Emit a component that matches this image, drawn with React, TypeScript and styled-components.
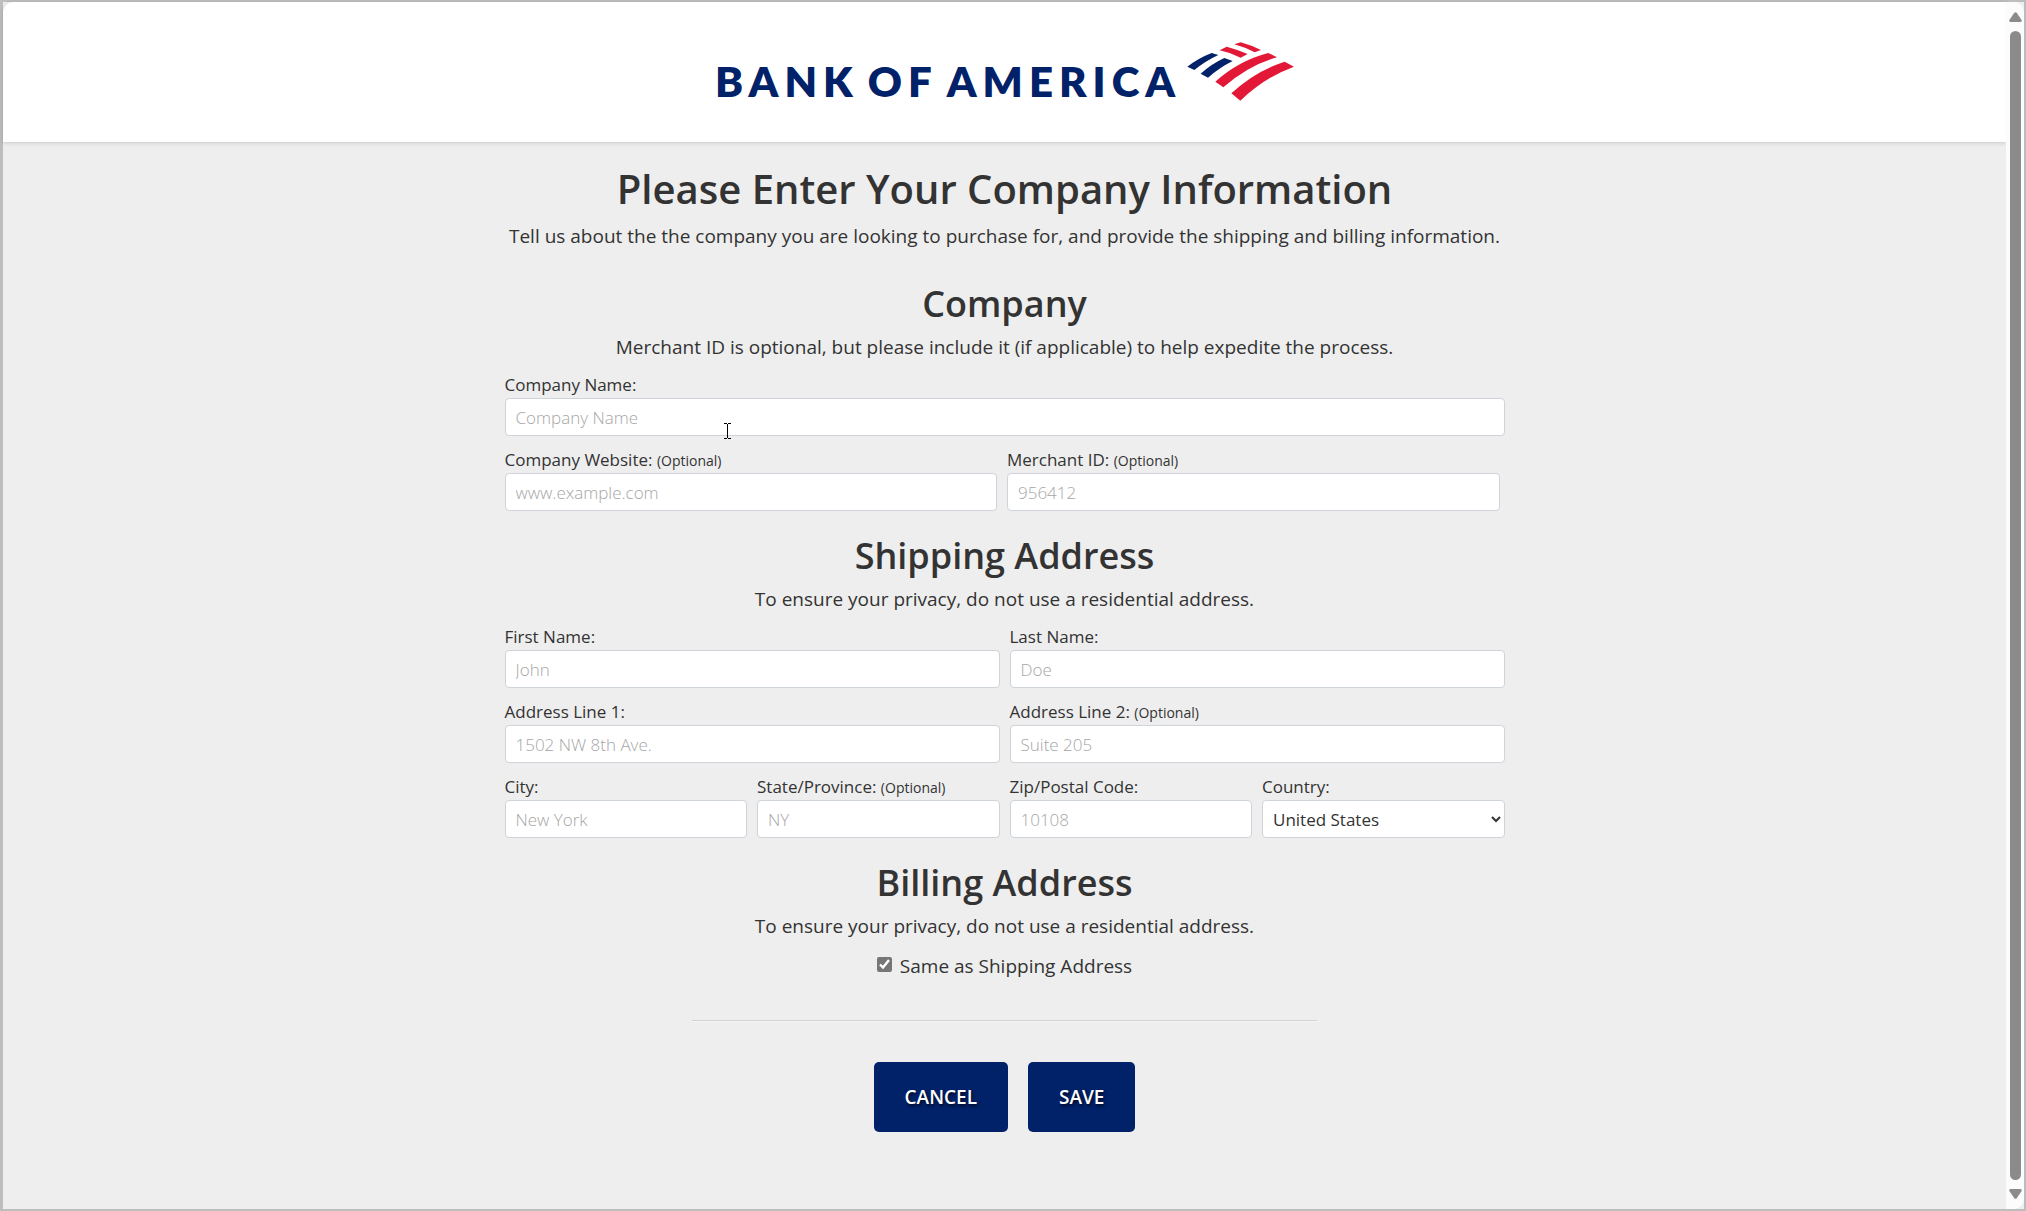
import React from "react";
import styled, { createGlobalStyle } from "styled-components";

const GlobalStyle = createGlobalStyle`
  *, *::before, *::after { box-sizing: border-box; }
  body {
    margin: 0;
    background: #eeeeee;
    color: #333333;
    font-family: "Open Sans", "Noto Sans", sans-serif;
    font-size: 19px;
    line-height: 30px;
  }
`;

const Window = styled.div`
  display: flex;
  min-height: 100vh;
  border: 2px solid #bdbdbd;
  border-left-width: 3px;
  background: #eeeeee;
`;

const Page = styled.div`
  flex: 1;
  min-width: 0;
`;

const Header = styled.header`
  display: flex;
  justify-content: center;
  align-items: flex-start;
  height: 140px;
  padding-top: 40px;
  border-top-left-radius: 10px;
  background: #ffffff;
  box-shadow: 0 1px 4px rgba(0, 0, 0, 0.16);
`;

const Brand = styled.a`
  display: flex;
  gap: 5px;
  color: #012169;
  text-decoration: none;
`;

const Wordmark = styled.span`
  display: flex;
  gap: 9px;
  padding-top: 15px;
  font-family: Lato, sans-serif;
  font-size: 42px;
  font-weight: 800;
  line-height: 48px;
  letter-spacing: 6px;
`;

const Flag = styled.svg`
  display: block;
  width: 108px;
  height: 59px;
`;

const Form = styled.form`
  display: flex;
  flex-direction: column;
  max-width: 1000px;
  margin: 0 auto;
  padding: 22px 0 40px;
`;

const Title = styled.h1`
  margin: 0 0 7px;
  font-size: 40px;
  font-weight: 600;
  line-height: 50px;
  text-align: center;
`;

const Intro = styled.p`
  margin: 0 0 8px;
  text-align: center;
`;

const Section = styled.section`
  display: flex;
  flex-direction: column;
  padding-top: 23px;
`;

const Heading = styled.h2`
  margin: 0 0 6px;
  font-size: 36px;
  font-weight: 600;
  line-height: 44px;
  text-align: center;
`;

const Note = styled.p`
  margin: 0 0 10px;
  text-align: center;
`;

const Fields = styled.div`
  display: flex;
  flex-direction: column;
  gap: 11px;
`;

const Row = styled.div<{ $columns: number; $inset?: boolean }>`
  display: grid;
  grid-template-columns: repeat(${(p) => p.$columns}, minmax(0, 1fr));
  gap: 10px;
  padding-right: ${(p) => (p.$inset ? "5px" : "0")};
`;

const FieldBox = styled.div`
  position: relative;
  display: flex;
  flex-direction: column;
`;

const Label = styled.label`
  font-size: 17px;
  line-height: 26px;
  white-space: nowrap;
`;

const Optional = styled.small`
  font-size: 14px;
  line-height: 14px;
`;

const Input = styled.input`
  width: 100%;
  height: 38px;
  padding: 0 10px;
  border: 1px solid #ced4da;
  border-radius: 4px;
  background: #ffffff;
  color: #333333;
  font-family: inherit;
  font-size: 17px;
  font-weight: 400;

  &::placeholder {
    color: #a6a6a6;
    opacity: 1;
    font-weight: 300;
  }
`;

const Select = styled.select`
  width: 100%;
  height: 38px;
  padding: 0 0 0 6px;
  border: 1px solid #ced4da;
  border-radius: 4px;
  background: #ffffff;
  color: #333333;
  font-family: inherit;
  font-size: 17px;
`;

const Pointer = styled.svg`
  position: absolute;
  top: 51px;
  left: 219px;
  width: 7px;
  height: 16px;
  pointer-events: none;
`;

const CheckRow = styled.label`
  display: flex;
  justify-content: center;
  gap: 8px;
`;

const Checkbox = styled.input`
  width: 15px;
  height: 15px;
  margin: 6px 0 0;
  accent-color: #767676;
`;

const Divider = styled.hr`
  width: 625px;
  max-width: 100%;
  margin: 39px auto 40px;
  border: 0;
  border-top: 1px solid #d2d2d2;
  border-bottom: 1px solid #f4f4f4;
`;

const Actions = styled.div`
  display: flex;
  justify-content: center;
  gap: 20px;
`;

const Button = styled.button`
  height: 70px;
  padding: 0 31px;
  border: 0;
  border-radius: 5px;
  background: #012169;
  color: #ffffff;
  font-family: inherit;
  font-size: 19px;
  font-weight: 600;
  text-shadow: 1px 2px 3px rgba(0, 0, 0, 0.7);
`;

const Scrollbar = styled.div`
  display: flex;
  flex-direction: column;
  align-items: center;
  gap: 9px;
  width: 18px;
  padding: 10px 0;
  border-radius: 0 10px 10px 0;
  background: #fcfcfc;
`;

const Thumb = styled.div`
  flex: 1;
  width: 11px;
  border-radius: 6px;
  background: #8b8b8b;
`;

const Arrow = styled.svg`
  display: block;
  width: 13px;
  height: 10px;
  fill: #8b8b8b;
`;

type FieldProps = {
  id: string;
  label: string;
  placeholder: string;
  optional?: boolean;
  children?: React.ReactNode;
};

function Field({ id, label, placeholder, optional, children }: FieldProps) {
  return (
    <FieldBox>
      <Label htmlFor={id}>
        {label}: {optional && <Optional>(Optional)</Optional>}
      </Label>
      <Input id={id} type="text" placeholder={placeholder} />
      {children}
    </FieldBox>
  );
}

export default function App() {
  return (
    <>
      <GlobalStyle />
      <Window>
        <Page>
          <Header>
            <Brand href="#">
              <Wordmark>
                <span>BANK</span>
                <span>OF</span>
                <span>AMERICA</span>
              </Wordmark>
              <Flag viewBox="48 36 324 177" aria-hidden="true">
                <g fill="#012169">
                  <path d="M52 110Q86 84 125 69L145 75Q108 92 73 120Z" />
                  <path d="M92 131Q124 102 163 84L188 93Q148 113 114 143Z" />
                </g>
                <g fill="#e31837">
                  <path d="M193 43L212 37Q244 46 273 60L254 67Q226 52 193 43Z" />
                  <path d="M149 61L170 50Q204 59 233 72L212 83Q182 68 149 61Z" />
                  <path d="M136 155Q206 92 295 69L321 82Q236 106 160 172Z" />
                  <path d="M184 190Q256 123 344 95L372 110Q286 141 211 212Z" />
                </g>
              </Flag>
            </Brand>
          </Header>

          <Form onSubmit={(e) => e.preventDefault()}>
            <Title>Please Enter Your Company Information</Title>
            <Intro>
              Tell us about the the company you are looking to purchase for, and provide the shipping and billing
              information.
            </Intro>

            <Section>
              <Heading>Company</Heading>
              <Note>Merchant ID is optional, but please include it (if applicable) to help expedite the process.</Note>
              <Fields>
                <Row $columns={1}>
                  <Field id="company" label="Company Name" placeholder="Company Name">
                    <Pointer viewBox="0 0 7 16" aria-hidden="true">
                      <path d="M0 .5H3M4 .5H7M0 15.5H3M4 15.5H7M3.5 1V15" stroke="#000" fill="none" />
                    </Pointer>
                  </Field>
                </Row>
                <Row $columns={2} $inset>
                  <Field id="website" label="Company Website" placeholder="www.example.com" optional />
                  <Field id="merchant" label="Merchant ID" placeholder="956412" optional />
                </Row>
              </Fields>
            </Section>

            <Section>
              <Heading>Shipping Address</Heading>
              <Note>To ensure your privacy, do not use a residential address.</Note>
              <Fields>
                <Row $columns={2}>
                  <Field id="first" label="First Name" placeholder="John" />
                  <Field id="last" label="Last Name" placeholder="Doe" />
                </Row>
                <Row $columns={2}>
                  <Field id="line1" label="Address Line 1" placeholder="1502 NW 8th Ave." />
                  <Field id="line2" label="Address Line 2" placeholder="Suite 205" optional />
                </Row>
                <Row $columns={4}>
                  <Field id="city" label="City" placeholder="New York" />
                  <Field id="state" label="State/Province" placeholder="NY" optional />
                  <Field id="zip" label="Zip/Postal Code" placeholder="10108" />
                  <FieldBox>
                    <Label htmlFor="country">Country:</Label>
                    <Select id="country" defaultValue="US">
                      <option value="US">United States</option>
                    </Select>
                  </FieldBox>
                </Row>
              </Fields>
            </Section>

            <Section>
              <Heading>Billing Address</Heading>
              <Note>To ensure your privacy, do not use a residential address.</Note>
              <CheckRow>
                <Checkbox type="checkbox" defaultChecked />
                Same as Shipping Address
              </CheckRow>
            </Section>

            <Divider />
            <Actions>
              <Button type="button">CANCEL</Button>
              <Button type="submit">SAVE</Button>
            </Actions>
          </Form>
        </Page>
        <Scrollbar aria-hidden="true">
          <Arrow viewBox="0 0 13 10">
            <path d="M5.3 .8Q6.5-.4 7.7.8L12.6 8Q13 10 11.5 10H1.5Q0 10 .4 8Z" />
          </Arrow>
          <Thumb />
          <Arrow viewBox="0 0 13 10">
            <path d="M5.3 9.2Q6.5 10.4 7.7 9.2L12.6 2Q13 0 11.5 0H1.5Q0 0 .4 2Z" />
          </Arrow>
        </Scrollbar>
      </Window>
    </>
  );
}
